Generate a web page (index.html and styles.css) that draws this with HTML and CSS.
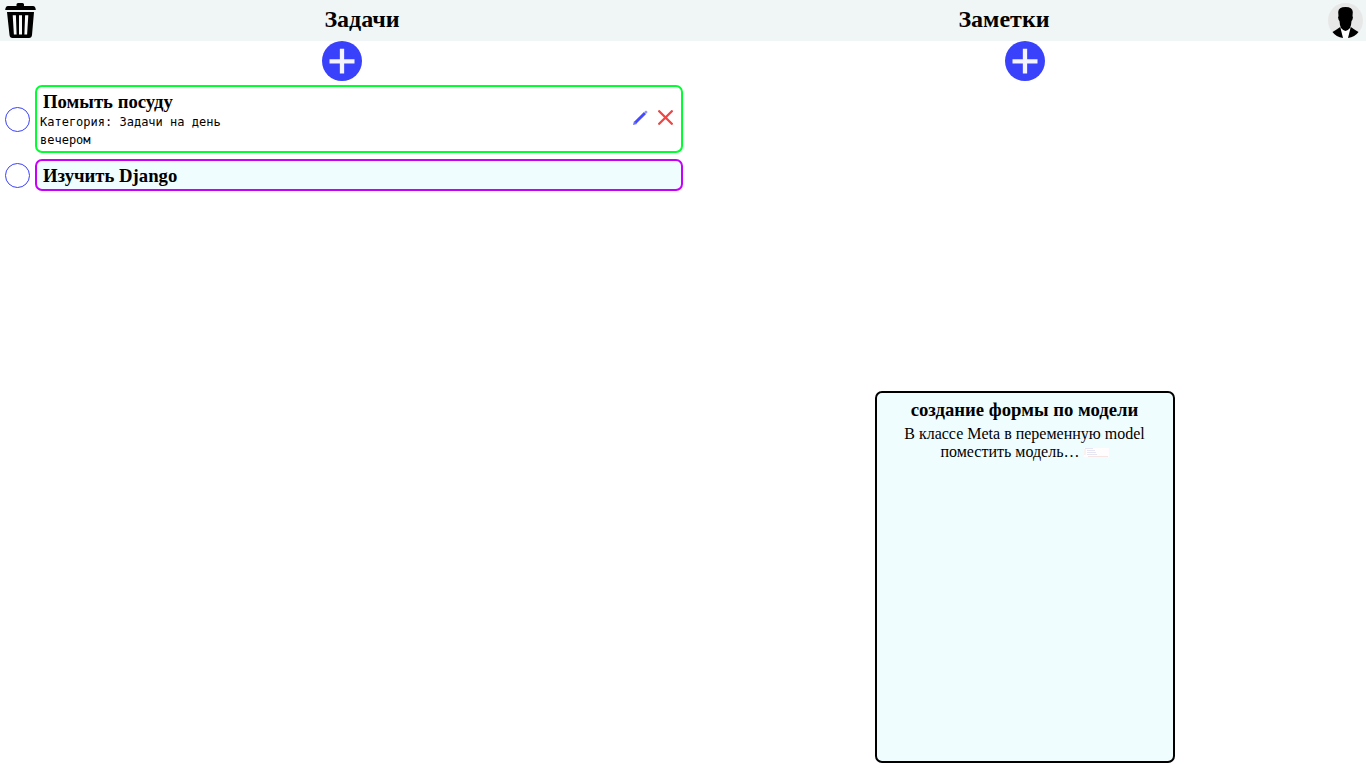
FILE: index.html
```html
<!DOCTYPE html>
<html lang="ru">
<head>
<meta charset="utf-8">
<title>Задачи и заметки</title>
<link rel="stylesheet" href="styles.css">
</head>
<body>
<header class="header">
  <button class="header-button" type="button" aria-label="Корзина">
    <svg viewBox="0 0 41 41" aria-hidden="true">
      <path d="M16.500 6V4.500Q16.500 3 18 3H22.500Q24 3 24 4.500V6H33Q35.500 6 35.800 10H5.200Q5.500 6 8 6Z"/>
      <path d="M7 12H34L32 35Q31.700 38 29 38H12.500Q9.800 38 9.500 35Z"/>
      <path d="M12.700 15.300H15.900L16.600 34.500H13.900ZM19 15.300H22V34.500H19ZM25.100 15.300H28.300L27.100 34.500H24.400Z" fill="#f8fbfa"/>
    </svg>
  </button>
  <h1 class="heading">Задачи</h1>
  <h1 class="heading">Заметки</h1>
  <button class="header-button" type="button" aria-label="Профиль">
    <svg viewBox="0 0 41 41" aria-hidden="true">
      <circle cx="20.500" cy="20.500" r="17.500" fill="#e7e7e7"/>
      <path d="M16.500 27H24.500L28 37Q20.500 40 13.500 37Z" fill="#fff"/>
      <path d="M13.200 12Q13.500 7 20.500 7Q27.500 7 27.800 12L27.500 16Q28.500 17 27.300 20L26.500 21Q26.200 26 25 28Q22.500 31 20.500 31Q18.500 31 16 28Q14.800 26 14.500 21L13.700 20Q12.500 17 13.500 16Z"/>
      <path d="M15.200 27L16.500 32L18 38Q11 37 7.500 32Q11 30 15.200 27ZM25.800 27L24.500 32L23 38Q30 37 33.500 32Q30 30 25.800 27Z"/>
    </svg>
  </button>
</header>
<main class="board">
  <section class="column">
    <button class="add" type="button" aria-label="Добавить задачу">
      <svg viewBox="0 0 40 40" aria-hidden="true"><circle cx="20" cy="20" r="20" fill="#3a41fa"/><path d="M20 7.800V32.500M7.500 20.300H32.500" stroke="#f3f4ff" stroke-width="4.300"/></svg>
    </button>
    <ul class="tasks">
      <li class="task">
        <input class="check" type="checkbox" aria-label="Помыть посуду">
        <article class="task-card task-card-open">
          <div class="task-body">
            <h3 class="task-title">Помыть посуду</h3>
            <p class="task-text">Категория: Задачи на день</p>
            <p class="task-text">вечером</p>
          </div>
          <div class="actions">
            <button class="action" type="button" aria-label="Изменить">
              <svg viewBox="0 0 15 15" aria-hidden="true"><path d="M2.200 12.800L12 3" stroke="#454bfa" stroke-width="3"/><path d="M11.200 2L13 .5L14.700 2L13 3.800Z" fill="#8b8fff"/><path d="M0 15L1 11L4 14Z" fill="#696eff"/></svg>
            </button>
            <button class="action" type="button" aria-label="Удалить">
              <svg viewBox="0 0 15 15" aria-hidden="true"><path d="M1.200 1.200L13.800 13.800M13.800 1.200L1.200 13.800" stroke="#f34444" stroke-width="2.300" stroke-linecap="round"/></svg>
            </button>
          </div>
        </article>
      </li>
      <li class="task">
        <input class="check" type="checkbox" aria-label="Изучить Django">
        <article class="task-card">
          <h3 class="task-title">Изучить Django</h3>
        </article>
      </li>
    </ul>
  </section>
  <section class="column">
    <button class="add" type="button" aria-label="Добавить заметку">
      <svg viewBox="0 0 40 40" aria-hidden="true"><circle cx="20" cy="20" r="20" fill="#3a41fa"/><path d="M20 7.800V32.500M7.500 20.300H32.500" stroke="#f3f4ff" stroke-width="4.300"/></svg>
    </button>
    <article class="note">
      <h3 class="note-title">создание формы по модели</h3>
      <p class="note-text">В классе Meta в переменную model поместить модель…
        <svg class="thumb" viewBox="0 0 25 9" aria-hidden="true"><path d="M0 0H25V9H0Z" fill="#fffdfd"/><path d="M1 .5H9M3 2.500H11M3 4.500H12M3 6.500H13" stroke="#e6e6f2"/><path d="M1 1V7M4 8.500H24" stroke="#f5e5e5"/></svg>
      </p>
    </article>
  </section>
</main>
</body>
</html>
```
FILE: styles.css
```css
* {
  box-sizing: border-box;
}

body {
  display: flex;
  flex-direction: column;
  min-height: 100vh;
  margin: 0;
  background: #fff;
  color: #000;
  font-family: "Liberation Serif", "Times New Roman", serif;
}

h1, h3, p, ul {
  margin: 0;
  padding: 0;
}

button {
  padding: 0;
  border: 0;
  background: none;
  cursor: pointer;
}

svg {
  display: block;
  width: 100%;
}

.header {
  display: flex;
  align-items: center;
  background: #f0f6f5;
}

.header-button {
  width: 41px;
  height: 41px;
}

.heading {
  flex: 1;
  padding-bottom: 4px;
  font-size: 24px;
  line-height: 28px;
  text-align: center;
}

.board {
  display: grid;
  flex: 1;
  grid-template-columns: 1fr 1fr;
}

.column {
  display: flex;
  flex-direction: column;
  align-items: center;
}

.add {
  width: 40px;
  height: 40px;
}

.tasks {
  display: grid;
  gap: 6px;
  width: 100%;
  padding-top: 4px;
  list-style: none;
}

.task {
  display: flex;
  align-items: center;
  gap: 5px;
  padding-left: 5px;
}

.check {
  appearance: none;
  flex: none;
  width: 25px;
  height: 25px;
  margin: 0;
  border: 1px solid #3a41fa;
  border-radius: 50%;
  background: #fff;
}

.check:checked {
  background: #3a41fa;
}

.task-card {
  display: flex;
  flex: 1;
  align-items: center;
  justify-content: space-between;
  padding: 3px 3px 2px;
  border: 2px solid #c800fa;
  border-radius: 7px;
  background: #effdff;
}

.task-card-open {
  border-color: #00ff2f;
  background: #fff;
}

.task-title {
  padding: 0 3px;
  line-height: 23px;
}

.task-text {
  font: 12px/18px "DejaVu Sans Mono", monospace;
}

.actions {
  display: flex;
  gap: 10px;
  padding: 0 5px 4px 0;
}

.action {
  width: 15px;
  height: 15px;
}

.note {
  width: 300px;
  min-height: 372px;
  margin: auto 0 5px;
  padding: 5px 20px;
  border: 2px solid #000;
  border-radius: 7px;
  background: #effdff;
  text-align: center;
}

.note-title {
  margin-bottom: 4px;
  line-height: 23px;
}

.note-text {
  font-size: 16px;
  line-height: 18px;
}

.thumb {
  display: inline-block;
  width: 25px;
  height: 9px;
}
```
